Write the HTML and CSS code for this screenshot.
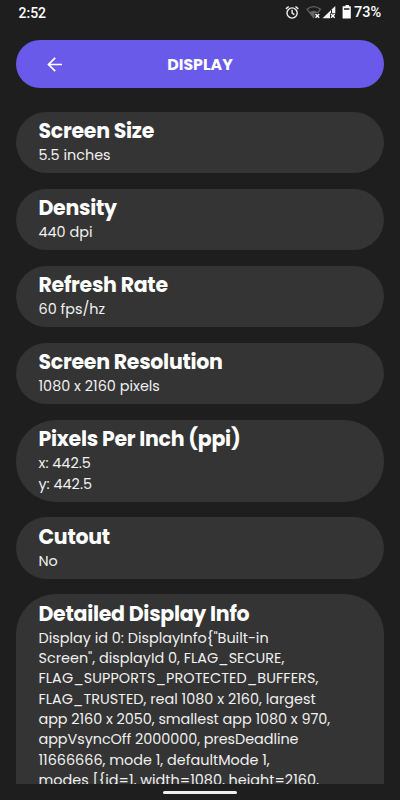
FILE: index.html
```html
<!DOCTYPE html>
<html lang="en">
<head>
<meta charset="utf-8">
<title>Display</title>
<link rel="stylesheet" href="styles.css">
</head>
<body>
<div class="status">
  <span class="clock">2:52</span>
  <svg class="status-icons" width="68" height="18" viewBox="0 0 68 18">
    <g fill="none" stroke="#f0f0f0" stroke-width="1.4">
      <circle cx="7.1" cy="9" r="5.1"/>
      <path d="M7.100 5.800v3.400l2.300 1.500M.9 4.900l2.800-2.400M13.300 4.900l-2.800-2.400"/>
    </g>
    <path d="M22 5.200Q28.500 .2 35.500 5.200L28.700 13.600z" fill="none" stroke="#626262" stroke-width="1.300"/>
    <path d="M24 8.400Q28.500 5 33 8.400L28.700 13.600z" fill="#666"/>
    <path d="M37.500 14.200L50.300 2v12.200z" fill="#f4f4f4"/>
    <path d="M46.500 6v5" stroke="#1e1e1e"/>
    <path d="M29.500 9h6.500v6.500h-6.500zM45 9.300h6v6h-6z" fill="#1e1e1e"/>
    <path d="M30.500 10l3.700 3.700m0-3.700l-3.700 3.700M46 10l3.700 3.700m0-3.700L46 13.700" stroke="#fff" stroke-width="1.400"/>
    <path d="M58.700 2.300h1.800V1h3.500v1.300h1.800v12.300h-8.200V2.300z" fill="#fff"/>
    <path d="M59 5h5.400" stroke="#1e1e1e" stroke-width="1.500"/>
  </svg>
  <span class="battery">73%</span>
</div>
<header class="bar">
  <svg class="back" width="16" height="16" viewBox="0 0 16 16"><path d="M15 8.500H2M8.200 1.800L1.500 8.500l6.700 6.700" fill="none" stroke="#fff" stroke-width="1.700"/></svg>
  <h1>DISPLAY</h1>
</header>
<main class="list">
  <section class="card"><h2>Screen Size</h2><p>5.5 inches</p></section>
  <section class="card"><h2>Density</h2><p>440 dpi</p></section>
  <section class="card"><h2>Refresh Rate</h2><p>60 fps/hz</p></section>
  <section class="card"><h2>Screen Resolution</h2><p>1080 x 2160 pixels</p></section>
  <section class="card tall"><h2>Pixels Per Inch (ppi)</h2><p>x: 442.5</p><p>y: 442.5</p></section>
  <section class="card"><h2>Cutout</h2><p>No</p></section>
  <section class="card detail"><h2>Detailed Display Info</h2>
    <p>Display id 0: DisplayInfo{"Built-in</p>
    <p>Screen", displayId 0, FLAG_SECURE,</p>
    <p class="loose">FLAG_SUPPORTS_PROTECTED_BUFFERS,</p>
    <p>FLAG_TRUSTED, real 1080 x 2160, largest</p>
    <p class="tight">app 2160 x 2050, smallest app 1080 x 970,</p>
    <p class="tight">appVsyncOff 2000000, presDeadline</p>
    <p>11666666, mode 1, defaultMode 1,</p>
    <p>modes [{id=1, width=1080, height=2160,</p>
  </section>
</main>
<div class="nav"><i></i></div>
</body>
</html>
```

FILE: styles.css
```css
* { box-sizing: border-box; margin: 0; padding: 0; }
body { width: 400px; height: 800px; overflow: hidden; display: flex; flex-direction: column; background: #1e1e1e; color: #fff; font-family: Poppins, Inter, sans-serif; }
.status { height: 40px; display: flex; align-items: flex-start; padding: 4px 17px 0 18.500px; font: 500 14px/18px Roboto, sans-serif; }
.status-icons { margin-left: auto; }
.battery { width: 29px; margin-left: 1.500px; font-size: 14.500px; }
.bar { flex: none; height: 48px; margin: 0 16px; border-radius: 24px; background: #6a5aea; display: flex; align-items: center; padding-left: 31px; }
.bar h1 { flex: 1; padding-right: 47px; text-align: center; font-size: 15.800px; font-weight: 700; }
.list { flex: none; height: 696px; overflow: hidden; padding: 24px 16px 0; display: flex; flex-direction: column; gap: 15.700px; }
.card { flex: none; height: 61.300px; border-radius: 31px; background: #343434; padding: 7.300px 22.500px 0; }
.card h2 { height: 26px; font-size: 20.500px; line-height: 24px; font-weight: 700; letter-spacing: -.28px; white-space: nowrap; }
.card p { font-size: 14.400px; line-height: 20.350px; color: #f0f0f0; white-space: nowrap; font-kerning: none; }
.card .loose { letter-spacing: .07px; }
.card .tight { letter-spacing: -.05px; }
.tall { height: 81.600px; border-radius: 40px; }
.detail { height: 240px; border-radius: 40px; }
.nav { flex: none; height: 16px; display: flex; justify-content: center; padding-top: 7px; }
.nav i { width: 74px; height: 3px; border-radius: 2px; background: #eee; }
```
